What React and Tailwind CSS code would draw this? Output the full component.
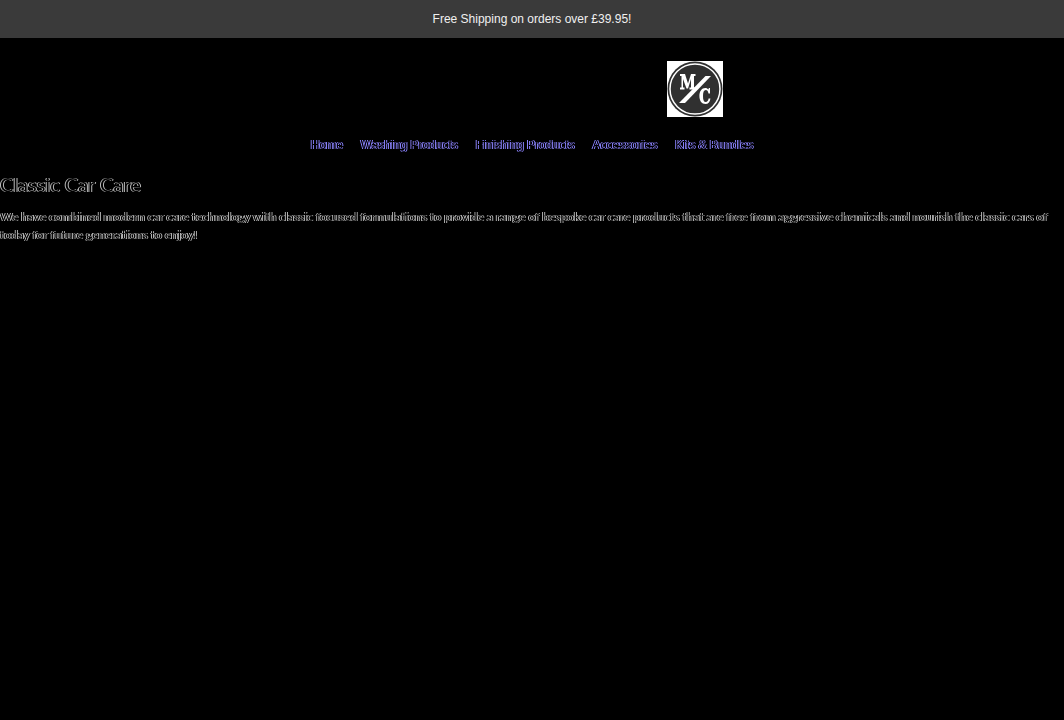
import React from 'react';

const navLinks = ['Home', 'Washing Products', 'Finishing Products', 'Accessories', 'Kits & Bundles'];

function Logo() {
  return (
    <svg viewBox="0 0 56 56" className="block w-14 h-14" aria-hidden="true">
      <rect width="56" height="56" fill="#ffffff" />
      <circle cx="28" cy="28" r="27.5" fill="#303030" />
      <circle cx="28" cy="28" r="25" fill="none" stroke="#ffffff" strokeWidth="1.5" />
      {/* M */}
      <path
        d="M13 13h5l3 9.500 3-9.500h4.500v2h-1.500v11.500h1.500v2h-6v-2h1.500v-8.500l-3 9.500h-1.500l-3.500-9.500v8.500h1.500v2H13v-2h1.500V15H13z"
        fill="#ffffff"
      />
      {/* Slash */}
      <path d="M38.500 15h5.500L18 42h-6z" fill="#ffffff" />
      {/* C */}
      <path
        d="M43 27v5.500h-1.500c-.4-2.500-1.400-3.500-2.700-3.500-2 0-2.800 2-2.800 6s.8 6 2.800 6c1.400 0 2.500-1.200 2.800-3.500h1.800c-.3 3.500-2 5.500-5 5.500-3.600 0-6-3-6-8s2.400-8 5.800-8c1.500 0 2.500.6 3.300 1.500l.3-1.500z"
        fill="#ffffff"
      />
    </svg>
  );
}

export default function App() {
  return (
    <div className="min-h-screen bg-black font-['Liberation_Sans',sans-serif] text-[12px] leading-[18px] text-black">
      {/* Announcement bar */}
      <div className="bg-[#3a3a3a] py-[10px] text-center text-[#f0f0f0]">
        <p>Free Shipping on orders over £39.95!</p>
      </div>

      <header className="pt-[23px]">
        <a href="#" aria-label="Classic Car Care" className="ml-[62.7%] block w-14">
          <Logo />
        </a>
        <nav className="mt-[19px] flex justify-center gap-[18px] will-change-transform [text-shadow:1px_0_0_#8c84ff,-1px_0_0_#8c84ff]">
          {navLinks.map((label) => (
            <a key={label} href="#">{label}</a>
          ))}
        </nav>
      </header>

      <main className="mt-[18px] font-[Lato,sans-serif] will-change-transform [text-shadow:1px_0_0_#b8b8b8,-1px_0_0_#b8b8b8]">
        <h1 className="text-[20px] leading-6">Classic Car Care</h1>
        <p className="mt-[12px]">
          We have combined modern car care technology with classic focused formulations to provide a range of bespoke car care products that are free from aggressive chemicals and nourish the classic cars of today for future generations to enjoy!
        </p>
      </main>
    </div>
  );
}
